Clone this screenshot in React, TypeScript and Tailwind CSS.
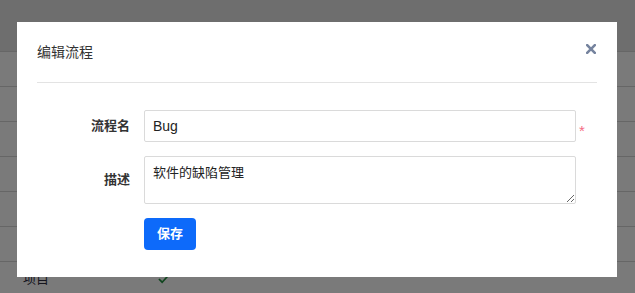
import React from "react";

const font = { fontFamily: '"Liberation Sans", "Noto Sans CJK SC", sans-serif' };

function CloseIcon() {
  return (
    <svg viewBox="0 0 10 10" className="h-[10px] w-[10px]" stroke="#75839e" strokeWidth={2.6} strokeLinecap="square">
      <path d="M1.2 1.2L8.8 8.8M8.8 1.2L1.2 8.8" />
    </svg>
  );
}

export default function App() {
  const rows = [0, 1, 2, 3, 4, 5];

  return (
    <div className="relative h-[293px] w-[635px] overflow-hidden bg-white" style={font}>
      {/* page behind the dialog */}
      <div className="h-[51px] bg-[#dcdcdc]" />
      {rows.map((r) => (
        <div key={r} className="h-[35px] border-t border-[#cdcdcd] bg-[#f4f4f4]" />
      ))}
      <div className="flex h-[35px] items-center border-t border-[#cdcdcd] bg-[#f4f4f4]">
        <span className="ml-[23px] w-[135px] text-[13px] text-[#2b2b3c]">项目</span>
        <svg viewBox="0 0 12 10" className="h-[10px] w-[11px]" fill="none" stroke="#1f8a3c" strokeWidth={1.8}>
          <path d="M1 5l3.5 3.5L11 1.5" />
        </svg>
      </div>

      {/* overlay + dialog */}
      <div className="absolute inset-0 bg-black/50">
        <div className="ml-[17px] mt-[22px] w-[600px] bg-white px-5">
          <div className="flex h-[61px] items-center justify-between border-b border-[#e3e3e3]">
            <span className="text-[14px] text-[#333]">编辑流程</span>
            <span className="mb-[6px] mr-[1px]">
              <CloseIcon />
            </span>
          </div>

          <div className="flex flex-col gap-[14px] pb-[27px] pt-[27px]">
            <div className="flex items-center">
              <label className="w-[93px] text-right text-[13px] font-bold text-[#333]">流程名</label>
              <input
                defaultValue="Bug"
                className="ml-[14px] h-[32px] w-[432px] rounded-[2px] border border-[#dadada] px-2 text-[14px] text-[#222] outline-none"
                style={font}
              />
              <span className="ml-[3px] mt-[8px] text-[15px] leading-none text-[#f56c84]">*</span>
            </div>

            <div className="flex items-center">
              <label className="w-[93px] text-right text-[13px] font-bold text-[#333]">描述</label>
              <textarea
                defaultValue="软件的缺陷管理"
                className="ml-[14px] h-[48px] w-[432px] rounded-[2px] border border-[#dadada] px-2 py-[6px] text-[13px] text-[#222] outline-none"
                style={font}
              />
            </div>

            <div className="flex">
              <button
                type="button"
                className="ml-[107px] h-[32px] w-[52px] rounded-[4px] bg-[#0d6afa] text-[13px] font-bold text-white"
              >
                保存
              </button>
            </div>
          </div>
        </div>
      </div>
    </div>
  );
}
